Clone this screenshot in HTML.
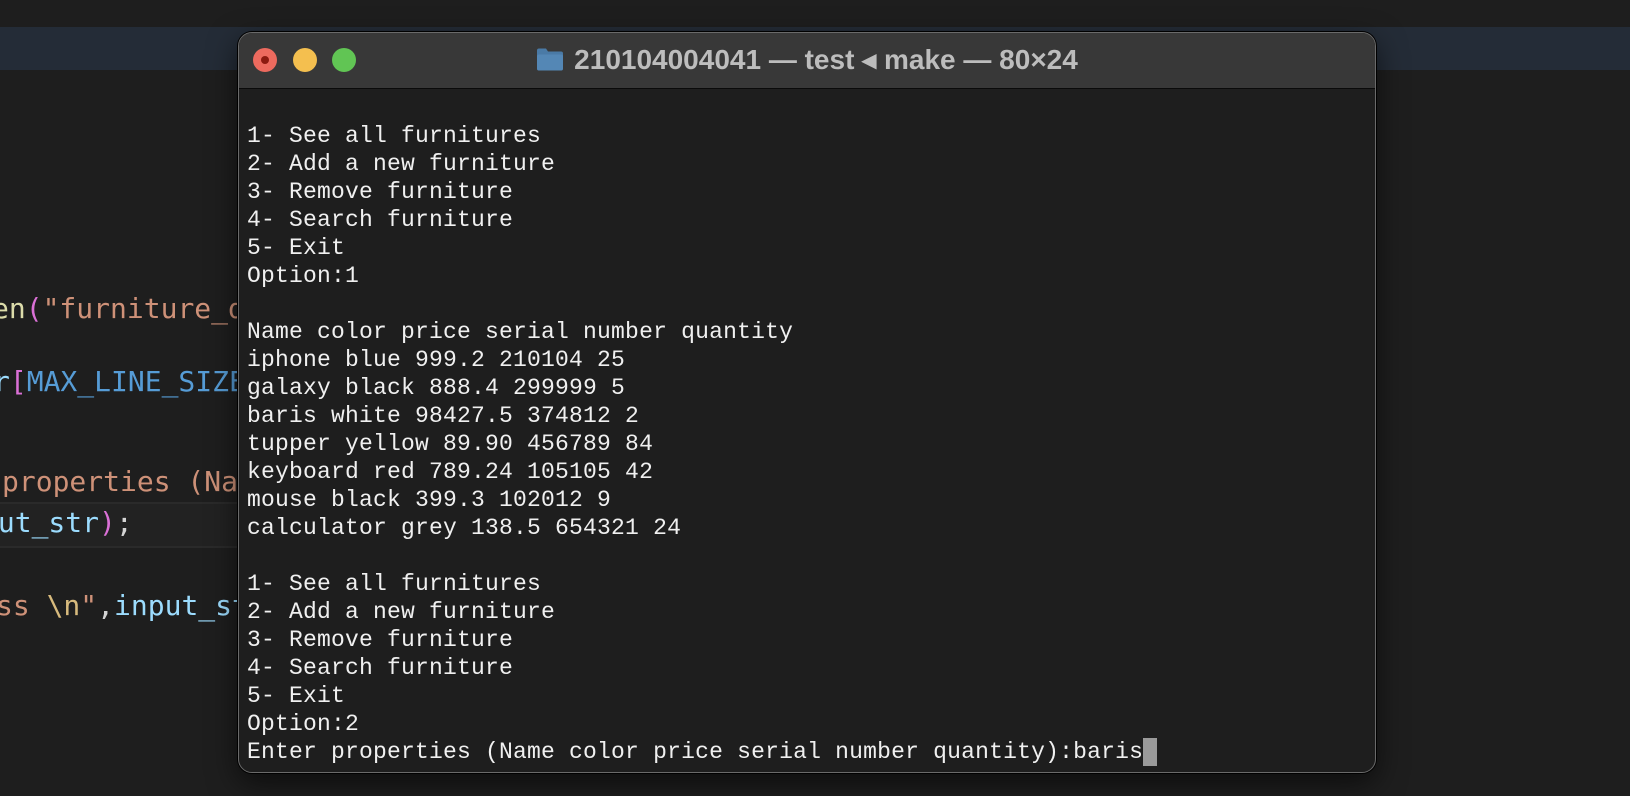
<!DOCTYPE html>
<html><head><meta charset="utf-8"><style>
html,body{margin:0;padding:0;width:1630px;height:796px;overflow:hidden;background:#1e1e1e;position:relative}
.band{position:absolute;left:0;top:27px;width:1630px;height:43px;background:#242c37}
.code{position:absolute;font-family:"DejaVu Sans Mono",monospace;font-size:28px;line-height:40px;white-space:pre;color:#d4d4d4}
.hl{position:absolute;left:0;top:502px;width:240px;height:42px;background:#222;border-top:2px solid #2a2a2a;border-bottom:2px solid #2a2a2a}
.win{position:absolute;left:238px;top:32px;width:1136px;height:739px;background:#1e1e1e;border:1px solid #6a6a6a;border-radius:14px;overflow:hidden;box-shadow:0 0 0 1px #000,0 10px 30px rgba(0,0,0,.6)}
.tb{position:absolute;left:0;top:0;width:100%;height:55px;background:#383838;border-bottom:1px solid #0a0a0a}
.dot{position:absolute;top:15px;width:24px;height:24px;border-radius:50%}
.title{position:absolute;left:0;width:100%;top:11px;text-align:center;font-family:"Liberation Sans",sans-serif;font-weight:bold;font-size:28px;color:#bdbdbd;line-height:32px}
.term{position:absolute;left:8px;top:61px;font-family:"Liberation Mono",monospace;font-size:23px;letter-spacing:0.2px;line-height:28px;color:#f0f0f0;white-space:pre}
.cur{display:inline-block;width:14px;height:28px;background:#9a9a9a;vertical-align:top}
</style></head><body>
<div class="band"></div>
<div class="hl"></div>
<div class="code" style="left:-8px;top:289px"><span style="color:#dcdcaa">en</span><span style="color:#da70d6">(</span><span style="color:#ce9178">"furniture_db.txt"</span></div>
<div class="code" style="left:-7px;top:362px"><span style="color:#9cdcfe">r</span><span style="color:#da70d6">[</span><span style="color:#569cd6">MAX_LINE_SIZE</span></div>
<div class="code" style="left:2px;top:462px"><span style="color:#ce9178">properties (Name</span></div>
<div class="code" style="left:-19px;top:503px"><span style="color:#9cdcfe">put_str</span><span style="color:#da70d6">)</span>;</div>
<div class="code" style="left:-4px;top:586px"><span style="color:#ce9178">ss </span><span style="color:#d7ba7d">\n</span><span style="color:#ce9178">"</span>,<span style="color:#9cdcfe">input_str</span></div>
<div class="win">
 <div class="tb">
  <div class="dot" style="left:14px;background:#ed6a5e"><div style="position:absolute;left:8px;top:8px;width:8px;height:8px;border-radius:50%;background:#8c1a10"></div></div>
  <div class="dot" style="left:54px;background:#f4bf4f"></div>
  <div class="dot" style="left:93px;background:#61c554"></div>
  <div class="title"><svg width="28" height="25" viewBox="0 0 28 24" style="vertical-align:-3px;margin-right:10px"><path d="M1 3 Q1 1 3 1 H10 L12 4 H25 Q27 4 27 6 V21 Q27 23 25 23 H3 Q1 23 1 21 Z" fill="#4a7aa6"/><rect x="1" y="7" width="26" height="16" rx="2" fill="#5487b5"/></svg>210104004041 — test ◂ make — 80×24</div>
 </div>
 <div class="term">
1- See all furnitures
2- Add a new furniture
3- Remove furniture
4- Search furniture
5- Exit
Option:1

Name color price serial number quantity
iphone blue 999.2 210104 25
galaxy black 888.4 299999 5
baris white 98427.5 374812 2
tupper yellow 89.90 456789 84
keyboard red 789.24 105105 42
mouse black 399.3 102012 9
calculator grey 138.5 654321 24

1- See all furnitures
2- Add a new furniture
3- Remove furniture
4- Search furniture
5- Exit
Option:2
Enter properties (Name color price serial number quantity):baris<span class="cur"></span></div>
</div>
</body></html>
